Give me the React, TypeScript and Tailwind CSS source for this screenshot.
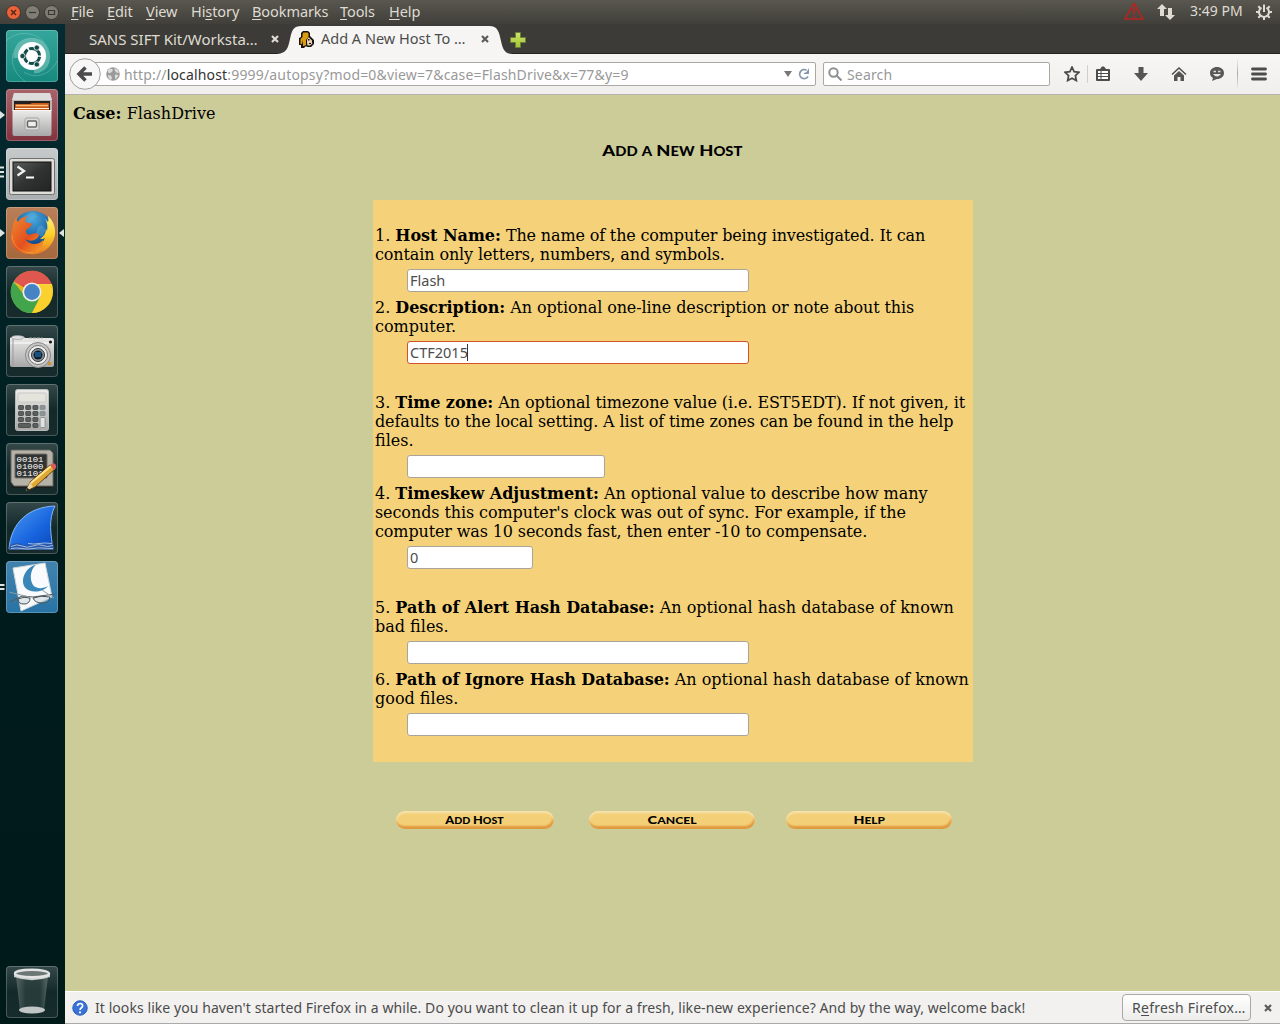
import React from "react";

const ui = "font-['Noto_Sans',sans-serif]";

function Tile({ bg, children }: { bg: string; children: React.ReactNode }) {
  return (
    <div className={`h-[52px] w-[52px] shrink-0 overflow-hidden rounded-[4px] ${bg} shadow-[inset_0_0_0_1px_rgba(255,255,255,0.22)]`}>
      <svg viewBox="0 0 52 52" className="block h-[52px] w-[52px]">{children}</svg>
    </div>
  );
}

function Launcher({ bg, left, right, children }: { bg: string; left?: "arrow" | "bars" | "two"; right?: boolean; children: React.ReactNode }) {
  return (
    <div className="flex h-[52px] w-[65px] items-center">
      <div className="flex w-[6px] shrink-0 items-center">
        {left === "arrow" && <svg viewBox="0 0 6 10" className="h-[10px] w-[6px]"><path d="M0 1L5 5 0 9z" fill="#dfe3e2" /></svg>}
        {left === "bars" && <svg viewBox="0 0 6 12" className="-mt-1 h-[12px] w-[6px]"><path d="M0 1.5h4M0 6h4M0 10.5h4" stroke="#dfe3e2" strokeWidth="2" /></svg>}
        {left === "two" && <svg viewBox="0 0 6 12" className="h-[12px] w-[6px]"><path d="M0 4h4.500M0 8h4.500" stroke="#dfe3e2" strokeWidth="2" /></svg>}
      </div>
      <Tile bg={bg}>{children}</Tile>
      {right && <svg viewBox="0 0 6 10" className="h-[10px] w-[6px]"><path d="M6 1L1 5l5 4z" fill="#dfe3e2" /></svg>}
    </div>
  );
}

const dark = "bg-linear-to-b from-[#35494a] via-[#12292a] to-[#172b2c]";

function Defs() {
  return (
    <svg className="absolute h-0 w-0">
      <defs>
        <linearGradient id="metal" x1="0" y1="0" x2="0" y2="1"><stop offset="0" stopColor="#ececeb" /><stop offset="1" stopColor="#a9a8a8" /></linearGradient>
        <linearGradient id="screen" x1="0" y1="0" x2="1" y2="1"><stop offset="0" stopColor="#5a5d5c" /><stop offset=".5" stopColor="#303332" /><stop offset="1" stopColor="#222524" /></linearGradient>
        <radialGradient id="globe" cx=".5" cy=".2" r=".8"><stop offset="0" stopColor="#49a8dc" /><stop offset=".6" stopColor="#1b62a5" /><stop offset="1" stopColor="#12295e" /></radialGradient>
        <linearGradient id="fox" x1="0" y1="0" x2="1" y2="1"><stop offset="0" stopColor="#ef8a2f" /><stop offset=".55" stopColor="#e4501f" /><stop offset="1" stopColor="#f6a52c" /></linearGradient>
        <linearGradient id="tail" x1="0" y1="0" x2="0" y2="1"><stop offset="0" stopColor="#fff17a" /><stop offset=".5" stopColor="#fbcf27" /><stop offset="1" stopColor="#ee7a22" /></linearGradient>
        <linearGradient id="fin" x1="0" y1="0" x2="1" y2="1"><stop offset="0" stopColor="#4f9cf2" /><stop offset=".6" stopColor="#1764df" /><stop offset="1" stopColor="#0c46b4" /></linearGradient>
        <linearGradient id="glass" x1="0" y1="0" x2="1" y2="0"><stop offset="0" stopColor="#778481" /><stop offset=".3" stopColor="#334744" /><stop offset=".75" stopColor="#314542" /><stop offset="1" stopColor="#7b8785" /></linearGradient>
        <linearGradient id="plus" x1="0" y1="0" x2="0" y2="1"><stop offset="0" stopColor="#d0e36b" /><stop offset="1" stopColor="#a2c52c" /></linearGradient>
      </defs>
    </svg>
  );
}

function Dock() {
  return (
    <nav className="flex w-[65px] shrink-0 flex-col justify-between bg-[#021c1c] bg-linear-to-b from-[#042b31] via-[#001c1d] to-[#001919] pt-[6px] pb-[6px]">
      <div className="flex flex-col gap-[7px]">
        <Launcher bg="bg-linear-to-b from-[#35a69b] to-[#168a80]">
          <g fill="none" stroke="#aee0da">
            <path d="M10 28C8 10 29 5 38 16c7 10 4 24-10 25" strokeWidth="5" opacity=".4" />
            <path d="M0 11C12-1 31 3 38 12M51 31c-7 15-23 18-33 11M7 23c-3 13 4 23 13 29" strokeWidth="1" opacity=".3" />
          </g>
          <circle cx="26" cy="26" r="14" fill="#fff" />
          <circle cx="26" cy="26" r="7.600" fill="none" stroke="#124d49" strokeWidth="3" strokeDasharray="14.300 1.617" strokeDashoffset="-.8" />
          <g fill="#124d49" stroke="#fff" strokeWidth=".8"><circle cx="16.500" cy="26" r="2.700" /><circle cx="30.800" cy="17.600" r="2.700" /><circle cx="30.800" cy="34.400" r="2.700" /></g>
        </Launcher>
        <Launcher left="arrow" bg="bg-linear-to-b from-[#a8646b] to-[#81333f]">
          <path d="M8 4h36l2 8v10H6V12z" fill="#b9b8b7" /><path d="M8 4h36l2 7H6z" fill="#dcdcdb" />
          <path d="M8 12h36v9H8z" fill="#242120" /><path d="M9 15h15l2-1h17v7H9z" fill="#c75918" /><path d="M10 16.500h32" stroke="#f9bc71" strokeWidth="1.500" /><path d="M9 19.500h34" stroke="#fff0dc" />
          <path d="M6.500 21h39v24q0 2-2 2h-35q-2 0-2-2z" fill="url(#metal)" /><path d="M7 21.500h38" stroke="#f7f7f5" />
          <rect x="19" y="29" width="14" height="12" rx="2" fill="#dcdcdb" stroke="#a2a2a1" /><rect x="21.500" y="32" width="9" height="6" rx="1" fill="#eee" stroke="#656666" strokeWidth="1.500" />
        </Launcher>
        <Launcher left="bars" bg="bg-linear-to-b from-[#c7cacb] to-[#aaaeb0]">
          <rect x="3.500" y="10.500" width="45" height="36" rx="2" fill="#deddd9" stroke="#6d706e" /><rect x="7" y="14" width="38" height="29" fill="url(#screen)" stroke="#111" />
          <path d="M11.500 18.500l6.500 4.500-6.500 4.500" stroke="#f1f1f1" strokeWidth="2.300" fill="none" /><path d="M20 29.500h8" stroke="#fff" strokeWidth="2" />
        </Launcher>
        <Launcher left="arrow" right bg="bg-linear-to-b from-[#b87f59] to-[#a4683e]">
          <circle cx="27" cy="24" r="20" fill="url(#globe)" /><path d="M25 5q6 0 6 5l-5 2-2 7-7 1 1-10zM36 18l4 5-4 7-6-4 2-6z" fill="#67b9dc" opacity=".35" />
          <path d="M42 9C51 17 52 32 42 41c-8 8-22 8-29 2 14 0 23-4 26-12-1 1-3 1-5 1 4-3 6-6 6-10l1 2c1-6 0-9-2-12l3 3c1-2 0-4 0-6z" fill="url(#tail)" />
          <path d="M11 9c-1 3 0 5 1 6 2-4 6-5 10-6-2 2-3 4-3 6 2 1 4 0 7 2-1 3-4 4-6 6-1 4 3 6 6 4 3-1 6-1 7 1-2 6-9 7-14 4 5 7 14 6 18 1 1 7-3 14-13 14C9 47 2 36 6 23c1-6 2-9 5-14z" fill="url(#fox)" />
          <path d="M6 28C7 40 15 46 27 46" stroke="#f6b644" fill="none" opacity=".5" />
        </Launcher>
        <Launcher bg={dark}>
          <circle cx="26" cy="26" r="21" fill="#e2b91d" /><path d="M26 26L7.800 15.500A21 21 0 0 1 46 19H27z" fill="#dc473e" /><path d="M7.500 15.500A21 21 0 0 0 26 47l8-16-16-2z" fill="#42a54c" /><path d="M28 18h18c4 16-7 29-20 29l9-17z" fill="#fbd12d" />
          <path d="M6 19a21 21 0 0 1 40 0z" fill="#fff" opacity=".09" /><circle cx="26" cy="26" r="9.500" fill="#f0eee9" /><circle cx="26" cy="26" r="7.900" fill="#4583c5" />
        </Launcher>
        <Launcher bg={dark}>
          <path d="M4 13l4-2h9l2 2h27q2 0 2 2v25q0 2-2 2H6q-2 0-2-2z" fill="url(#metal)" /><path d="M5 18h42" stroke="#fff" /><path d="M23 13h14" stroke="#a3a3a0" strokeDasharray="3 1" /><ellipse cx="11.500" cy="12.500" rx="6" ry="2" fill="#ddd" stroke="#999" strokeWidth=".7" />
          <circle cx="32" cy="30" r="12.500" fill="#c5c6c4" stroke="#888" /><circle cx="32" cy="30" r="9.500" fill="#eee" stroke="#777" /><circle cx="32" cy="30" r="6.500" fill="#8b9297" stroke="#333" /><circle cx="32" cy="30" r="4.500" fill="#0b1f30" /><path d="M29 27h6v5h-6z" fill="#19517e" />
          <circle cx="44.500" cy="17" r="1.600" fill="#191919" /><rect x="42" y="37" width="3" height="3" fill="#cf9132" /><path d="M7 14v27" stroke="#999" />
        </Launcher>
        <Launcher bg={dark}>
          <rect x="9.500" y="5.500" width="33" height="41" rx="2" fill="url(#metal)" stroke="#b9b9b7" /><rect x="12" y="9" width="28" height="9" rx="1" fill="#e4e3dc" stroke="#c9c9c7" />
          {[0, 1, 2, 3].map((r) => [0, 1, 2, 3].map((c) => (r === 3 && (c === 1 || c === 3)) ? null : <rect key={`${r}${c}`} x={12.5 + c * 7.2} y={21.5 + r * 6} width={r === 3 && c === 0 ? 12 : 5} height={r === 2 && c === 3 ? 10 : 4} rx=".7" fill={c === 3 ? (r > 1 ? "#dfe2e4" : "#8c9699") : "#5b605e"} stroke={c === 3 ? "#7d8587" : "#3c413f"} strokeWidth=".8" />))}
        </Launcher>
        <Launcher bg={dark}>
          <path d="M8 42h35l3 3H5z" fill="#1a1b1a" /><path d="M5 7h39l3 3v33H8l-3-4z" fill="#b7b2a8" stroke="#666761" /><rect x="9" y="11" width="32" height="24" rx="1" fill="#303331" stroke="#6e6d68" />
          <g fill="#fff" fontFamily="Liberation Mono" fontSize="7.500"><text x="10.500" y="19" textLength="27" lengthAdjust="spacingAndGlyphs">00101</text><text x="10.500" y="26" textLength="27" lengthAdjust="spacingAndGlyphs">01000</text><text x="10.500" y="33" textLength="27" lengthAdjust="spacingAndGlyphs">01101</text></g>
          <path d="M20 48l4-9L44 22l5 4-20 18z" fill="#e0a832" stroke="#5b451f" /><path d="M25 40l20-17" stroke="#ffe394" strokeWidth="2" /><path d="M44 22l3-2q4 1 3 5l-2 2z" fill="#d85c5e" /><path d="M20 48l4-9 3 5z" fill="#ead2a2" /><path d="M20 48l1.500-3 2 1.500z" fill="#111" />
        </Launcher>
        <Launcher bg={dark}>
          <path d="M3 47C5 21 22 5 49 4c-7 13-4 30-2 43z" fill="url(#fin)" stroke="#82b8f5" /><path d="M4 43.500q6-4 11-1.500t11 0 10-.5 11-1l1 7H3z" fill="#2a57a8" /><path d="M5 44.500q6-3 11-.5t11 0 10-.5 10 0M5 46.500q6-1 11 0t11 0 10-.5 10 .5M22 41.500q6 1 11 0t13 0" fill="none" stroke="#c3d6ee" strokeWidth=".8" />
        </Launcher>
        <Launcher left="two" bg="bg-linear-to-b from-[#4183ae] to-[#2874a5]">
          <path d="M7 7l32-5 7 34-31 14z" fill="#f8fafb" stroke="#d1d7da" />
          <path d="M30 3.500C19 7 14 19 19 26.500c5 6.500 19 4.500 23-1.500-5 3-12 3-15-1C23.500 18.500 24 9 30 3.500z" fill="#3787b8" />
          <path d="M4 41l12-6 11 1 22-3" stroke="#535e63" strokeWidth="1.200" fill="none" /><path d="M12 38q6-3 12-1 0 6-6 6-6 0-6-5zm15-1q8-3 17-1-1 6-8 6-7 0-9-5z" fill="#c8d4da" fillOpacity=".5" stroke="#424e54" /><path d="M3 31l20 5M36 29l12 8" stroke="#899ba3" />
        </Launcher>
      </div>
      <Launcher bg={dark}>
        <path d="M10 10h32l-4 35q-12 5-24 0z" fill="url(#glass)" opacity=".6" /><ellipse cx="26" cy="44" rx="13" ry="3.500" fill="#c0c6c4" /><path d="M8 8v3q18 6.500 36 0V8q-18 7-36 0z" fill="#c9cdcb" /><ellipse cx="26" cy="7.500" rx="17" ry="3.800" fill="#6c7674" stroke="#e1e4e3" strokeWidth="2.400" />
      </Launcher>
    </nav>
  );
}

const menus: [string, string, string, string][] = [
  ["", "F", "ile", "w-[36px]"], ["", "E", "dit", "w-[39px]"], ["", "V", "iew", "w-[45px]"], ["Hi", "s", "tory", "w-[61px]"],
  ["", "B", "ookmarks", "w-[88px]"], ["", "T", "ools", "w-[49px]"], ["", "H", "elp", "w-[40px]"],
];

function MenuBar() {
  return (
    <header className={`flex h-[24px] shrink-0 items-center bg-linear-to-b from-[#59574f] to-[#403f3a] text-[14.5px] text-[#dfdbd2] ${ui}`}>
      <div className="flex w-[71px] shrink-0 gap-[4px] pl-[6px]">
        <svg viewBox="0 0 15 15" className="h-[15px] w-[15px]"><circle cx="7.500" cy="7.500" r="7" fill="#ec6136" stroke="#3c3933" /><path d="M5 5l5 5M10 5l-5 5" stroke="#4b251a" strokeWidth="1.300" /></svg>
        <svg viewBox="0 0 15 15" className="h-[15px] w-[15px]"><circle cx="7.500" cy="7.500" r="7" fill="#807d74" stroke="#3c3933" /><path d="M4 7.500h7" stroke="#3a3832" strokeWidth="1.200" /></svg>
        <svg viewBox="0 0 15 15" className="h-[15px] w-[15px]"><circle cx="7.500" cy="7.500" r="7" fill="#807d74" stroke="#3c3933" /><path d="M4.500 5.500h6v4h-6z" fill="none" stroke="#3a3832" strokeWidth="1.200" /></svg>
      </div>
      {menus.map(([a, b, c, w]) => <span key={b} className={`${w} -mt-[2px] shrink-0 whitespace-nowrap leading-[22px] tracking-[-0.08px]`}>{a}<span className="underline underline-offset-2">{b}</span>{c}</span>)}
      <div className="ml-auto flex items-center pr-[7px]">
        <svg viewBox="0 0 20 18" className="-mt-[2px] mr-[13px] h-[18px] w-[20px]" fill="none" stroke="#b9231f"><path d="M10 1.500L19 17H1z" strokeWidth="1.600" /><path d="M10 6v6M10 13.500v2" strokeWidth="2" /></svg>
        <svg viewBox="0 0 18 18" className="mr-[15px] h-[18px] w-[18px]" fill="#dfdbd2"><path d="M5 1l5 5H7v7H3V6H0zM11 5h4v7h3l-5 5-5-5h3z" /></svg>
        <span className="-mt-[2px] w-[65px] whitespace-nowrap text-[14px] leading-[22px]">3:49 PM</span>
        <svg viewBox="0 0 18 18" className="h-[18px] w-[18px]" fill="none" stroke="#dfdbd2"><path d="M6.500 4.600a5 5 0 1 0 5 0M9 1.500V9" strokeWidth="2" /><path d="M1 9h3M14 9h3M3.300 3.300l2 2M14.700 3.300l-2 2M3.300 14.700l2-2M14.700 14.700l-2-2M9 14v3" strokeWidth="2" /></svg>
      </div>
    </header>
  );
}

function Cross({ color }: { color: string }) {
  return <svg viewBox="0 0 8 8" className="h-[8px] w-[8px]"><path d="M1 1l6 6M7 1L1 7" stroke={color} strokeWidth="2.200" /></svg>;
}

function Tabs() {
  return (
    <div className={`flex h-[30px] shrink-0 border-b border-[#25241f] bg-[#3c3b37] ${ui}`}>
      <div className="flex h-[30px] w-[217px] items-center pl-[24px] text-[15px] text-[#dfdbd2]">
        <span className="w-[182px] whitespace-nowrap">SANS SIFT Kit/Worksta…</span><Cross color="#dfdbd2" />
      </div>
      <div className="relative h-[30px] w-[228px]">
        <svg viewBox="0 0 232 30" className="absolute left-0 top-0 h-[30px] w-[232px] overflow-visible"><path d="M-5 30C5 29 6 24 8 15S11 2 20 2H207C216 2 217 8 219 17S223 30 231 30z" fill="#f6f5f4" /></svg>
        <div className="relative flex h-[30px] items-center pl-[16px] text-[14.500px] text-[#4c4c4c]">
          <svg viewBox="0 0 17 17" className="mr-[6px] h-[17px] w-[17px]"><path d="M5 0h5l2 2v3l4 4v4l-3 3H9l-1-1-2 2H3v-3H1V7l2-1V2z" fill="#17130c" /><path d="M5.500 1.500h4l1 1v3L8 9v5l-2 1H5V9l-1 4H2.500V8L4.500 6V3z" fill="#d99d12" /><path d="M10 6.500h1l3.500 3.500v2.500L12 14.500H9.500L9 12V9z" fill="#e9cfae" /><path d="M10 8h1.500v1.500H10zM14 9.500h2V12h-2zM11 12h2v1h-2z" fill="#111" /></svg>
          <span className="w-[160px] whitespace-nowrap">Add A New Host To …</span><Cross color="#5b5b5b" />
        </div>
      </div>
      <div className="flex h-[30px] flex-1 items-center">
        <svg viewBox="0 0 16 16" className="relative mt-px h-[16px] w-[16px]"><path d="M5.500.5h5v5h5v5h-5v5h-5v-5h-5v-5h5z" fill="url(#plus)" stroke="#66813a" /></svg>
      </div>
    </div>
  );
}

function Toolbar() {
  return (
    <div className={`flex h-[41px] shrink-0 items-center border-b border-[#b5b4ac] bg-linear-to-b from-[#f7f6f5] to-[#f0efee] text-[14px] ${ui}`}>
      <div className="relative z-10 ml-[4px] h-[32px] w-[32px] shrink-0">
        <svg viewBox="0 0 32 32" className="h-[32px] w-[32px]"><circle cx="16" cy="16" r="15.300" fill="#f8f7f7" stroke="#9f9f9f" /><path d="M23 16H11M16.500 9.500L10 16l6.500 6.500" fill="none" stroke="#4b4b4b" strokeWidth="3.500" /></svg>
      </div>
      <div className="-ml-[8px] flex h-[24px] w-[723px] shrink-0 items-center rounded-[2px] border border-[#aaa9a1] bg-white pl-[12px] text-[#999]">
        <svg viewBox="0 0 14 14" className="mr-[4px] h-[14px] w-[14px] shrink-0"><circle cx="7" cy="7" r="6.800" fill="#9a9a9a" /><path d="M1.500 4l2-2.500L6 2l1 1.500-2 2-2 1zM2 8l3 .5L6 11l-1 2-2.500-2zM8.500 1l3 1.500 1.500 3-2 .5-2-2zM9 7.500l3.500.5-1.500 3-2 1z" fill="#dcdcdc" /></svg>
        <span className="w-[660px] shrink-0 whitespace-nowrap tracking-[0.165px]">http://<span className="text-[#333]">localhost</span>:9999/autopsy?mod=0&amp;view=7&amp;case=FlashDrive&amp;x=77&amp;y=9</span>
        <svg viewBox="0 0 8 6" className="mr-[6px] h-[6px] w-[8px] shrink-0"><path d="M0 0h8L4 6z" fill="#777" /></svg>
        <svg viewBox="0 0 12 12" className="h-[12px] w-[12px] shrink-0"><path d="M8.500 2.200A4.500 4.500 0 1 0 10 8.500" fill="none" stroke="#8797aa" strokeWidth="1.800" /><path d="M11 0v6H6V5l2.500-1z" fill="#8797aa" /></svg>
      </div>
      <div className="ml-[7px] flex h-[24px] w-[227px] items-center rounded-[2px] border border-[#aaa9a1] bg-white pl-[4px] text-[#999] tracking-[0.15px]">
        <svg viewBox="0 0 14 14" className="mr-[5px] h-[14px] w-[14px]" fill="none" stroke="#8f8f8f" strokeWidth="2"><circle cx="5.500" cy="5.500" r="4.200" /><path d="M8.500 8.500l5 5" /></svg>Search
      </div>
      <div className="flex items-center pl-[14px]">
        <svg viewBox="0 0 16 16" className="h-[16px] w-[16px]"><path d="M8 1.200l2.100 4.400 4.900.7-3.600 3.300.9 4.900L8 12.200l-4.300 2.300.9-4.900L1 6.300l4.900-.7z" fill="none" stroke="#4c4c4c" strokeWidth="1.800" /></svg>
        <div className="ml-[7px] mr-[8px] h-[18px] w-px bg-[#cfcfcf]" />
        <svg viewBox="0 0 14 16" className="h-[16px] w-[14px]"><path d="M1 3h3l2-2.500h2L10 3h3q1 0 1 1v10q0 1-1 1H1q-1 0-1-1V4q0-1 1-1z" fill="#4c4c4c" /><path d="M2 5h10v8H2z" fill="#fff" /><path d="M2 7.500h10M2 10.500h10M5 5v8" stroke="#4c4c4c" /></svg>
        <svg viewBox="0 0 14 14" className="ml-[24px] h-[14px] w-[14px]"><path d="M4.500 0h5v6H14l-7 8-7-8h4.500z" fill="#555" /></svg>
        <svg viewBox="0 0 16 16" className="ml-[23px] h-[16px] w-[16px]"><path d="M1 8.500L8 2l7 6.500" fill="none" stroke="#4c4c4c" strokeWidth="1.500" /><path d="M3 9.500l5-4.500 5 4.500V15H9.500v-4h-3v4H3z" fill="#555" /></svg>
        <svg viewBox="0 0 16 16" className="ml-[22px] h-[16px] w-[16px]"><path d="M8 1c4 0 7 2.500 7 6s-3 6-7 6l-5 2 1-3C2 11 1 9 1 7c0-3.500 3-6 7-6z" fill="#585858" /><path d="M4 8q4 5 8 0z" fill="#e8e8e8" /><path d="M4.500 5.500h2.500M9 5.500h2.500" stroke="#ddd" strokeWidth="1.500" /></svg>
        <div className="ml-[12px] mr-[13px] h-[32px] w-px bg-linear-to-b from-transparent via-[#aaa] to-transparent" />
        <svg viewBox="0 0 16 14" className="h-[14px] w-[16px]"><path d="M1.500 2h13M1.500 7h13M1.500 12h13" stroke="#4c4c4c" strokeWidth="2.800" strokeLinecap="round" /></svg>
      </div>
    </div>
  );
}

type FieldProps = { n: number; title: string; first: React.ReactNode; rest: React.ReactNode; width: string; value?: string; focused?: boolean };

function Field({ n, title, first, rest, width, value, focused }: FieldProps) {
  return (
    <div className="flex flex-col">
      <p className="whitespace-nowrap leading-[19px]">{n}. <b className="tracking-[-0.03px]">{title}</b> {first}<br />{rest}</p>
      <div className={`mt-[5px] ml-[32px] flex h-[23px] items-center rounded-[3px] border bg-white pl-[2px] text-[14.5px] leading-[21px] text-[#4c4c4c] ${width} ${ui} ${focused ? "border-[#d0532b]" : "border-[#aaa59a]"}`}>
        {value}{focused && <span className="-ml-px h-[17px] w-px bg-[#333]" />}
      </div>
    </div>
  );
}

function Caps({ text, big }: { text: string; big: string }) {
  return <>{text.split(" ").map((w, i) => <span key={i}>{i > 0 && " "}<span className={w === "a" ? "" : big}>{w[0].toUpperCase()}</span>{w.slice(1).toUpperCase()}</span>)}</>;
}

function PillButton({ text, width, stretch }: { text: string; width: string; stretch: string }) {
  return (
    <button className={`flex h-[18px] items-center justify-center rounded-[9px] bg-[#f3d078] pb-px font-['Lato',sans-serif] text-[10px] font-black leading-none text-black shadow-[inset_0_2px_2px_#f8e3ae,inset_-1px_-3px_2px_#e0993f] ${width}`}>
      <span className={`inline-block whitespace-nowrap ${stretch}`}><Caps text={text} big="text-[12px]" /></span>
    </button>
  );
}

function Page() {
  return (
    <main className="flex flex-1 flex-col bg-[#cccc99] font-['DejaVu_Serif',serif] text-[16px] text-black">
      <p className="mt-[9px] ml-[8px] leading-[19px] tracking-[0.06px]"><b>Case:</b> FlashDrive</p>
      <h1 className="mt-[18px] flex h-[20px] w-full items-center justify-center font-['Lato',sans-serif] text-[12.5px] font-black leading-none"><span className="inline-block scale-x-[1.18] whitespace-nowrap [word-spacing:1px]"><Caps text="Add a New Host" big="text-[15.5px]" /></span></h1>
      <section className="mt-[39px] ml-[308px] flex h-[562px] w-[600px] flex-col gap-[29px] bg-[#f5d27a] px-[2px] pt-[26px]">
        <div className="flex flex-col gap-[6px]">
          <Field n={1} title="Host Name:" first={<span className="tracking-[-0.15px]">The name of the computer being investigated. It can</span>} rest={<span className="tracking-[-0.12px]">contain only letters, numbers, and symbols.</span>} width="w-[342px]" value="Flash" />
          <Field n={2} title="Description:" first={<span className="tracking-[-0.1px]">An optional one-line description or note about this</span>} rest="computer." width="w-[342px]" value="CTF2015" focused />
        </div>
        <div className="flex flex-col gap-[6px]">
          <Field n={3} title="Time zone:" first={<span className="tracking-[-0.08px]">An optional timezone value (i.e. EST5EDT). If not given, it</span>} rest={<><span className="tracking-[-0.145px]">defaults to the local setting. A list of time zones can be found in the help</span><br />files.</>} width="w-[198px]" />
          <Field n={4} title="Timeskew Adjustment:" first={<span className="tracking-[-0.04px]">An optional value to describe how many</span>} rest={<><span className="tracking-[-0.09px]">seconds this computer's clock was out of sync. For example, if the</span><br /><span className="tracking-[-0.13px]">computer was 10 seconds fast, then enter -10 to compensate.</span></>} width="w-[126px]" value="0" />
        </div>
        <div className="flex flex-col gap-[6px]">
          <Field n={5} title="Path of Alert Hash Database:" first="An optional hash database of known" rest="bad files." width="w-[342px]" />
          <Field n={6} title="Path of Ignore Hash Database:" first="An optional hash database of known" rest="good files." width="w-[342px]" />
        </div>
      </section>
      <div className="mt-[49px] ml-[331px] flex">
        <PillButton text="Add Host" width="w-[158px]" stretch="scale-x-[1.06]" />
        <div className="ml-[35px] flex gap-[31px]"><PillButton text="Cancel" width="w-[166px]" stretch="scale-x-[1.22]" /><PillButton text="Help" width="w-[166px]" stretch="scale-x-[1.18]" /></div>
      </div>
    </main>
  );
}

function Notice() {
  return (
    <footer className={`flex h-[33px] shrink-0 items-center border-t border-b border-t-white border-b-[#aaa] bg-[#f2f1f0] pl-[7px] text-[14px] text-[#4c4c4c] ${ui}`}>
      <svg viewBox="0 0 16 16" className="mr-[7px] h-[16px] w-[16px] shrink-0"><circle cx="8" cy="8" r="7.200" fill="#3874d8" stroke="#2459b5" /><path d="M5.500 6q.2-2.500 2.700-2.500T10.600 6C10.600 7.800 8 7.700 8 10" fill="none" stroke="#fff" strokeWidth="1.700" /><path d="M7 11.500h2v1.700H7z" fill="#fff" /></svg>
      <span className="w-[1027px] shrink-0 whitespace-nowrap tracking-[0.07px]">It looks like you haven't started Firefox in a while. Do you want to clean it up for a fresh, like-new experience? And by the way, welcome back!</span>
      <button className="flex h-[27px] w-[129px] shrink-0 items-center justify-start rounded-[4px] border border-[#aaa9a5] bg-linear-to-b from-white to-[#ececeb] pl-[9px] whitespace-nowrap tracking-[0.25px]"><span>R<span className="underline underline-offset-2">e</span>fresh Firefox…</span></button>
      <span className="ml-[13px]"><Cross color="#5b5b5b" /></span>
    </footer>
  );
}

export default function App() {
  return (
    <div className="flex h-[1024px] w-[1280px] flex-col overflow-hidden">
      <Defs />
      <MenuBar />
      <div className="flex min-h-0 flex-1">
        <Dock />
        <div className="flex min-w-0 flex-1 flex-col"><Tabs /><Toolbar /><Page /><Notice /></div>
      </div>
    </div>
  );
}
